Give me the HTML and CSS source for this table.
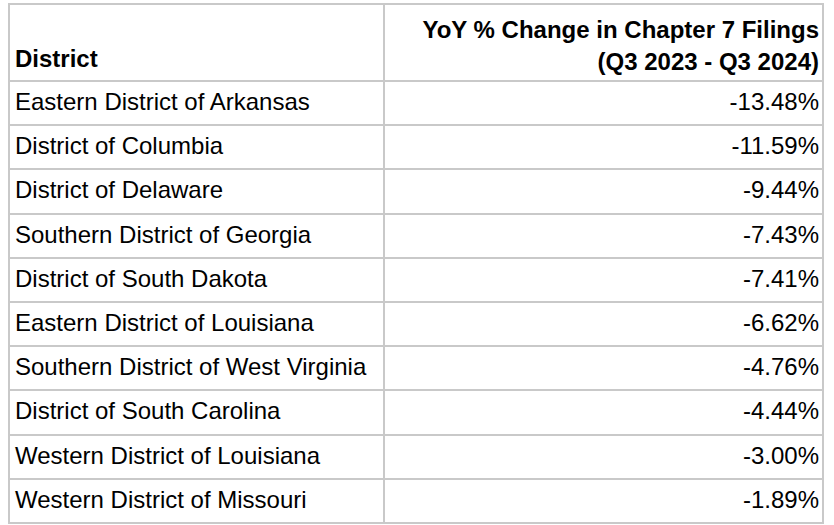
FILE: index.html
```html
<!DOCTYPE html>
<html>
<head>
<meta charset="utf-8">
<link rel="stylesheet" href="styles.css">
</head>
<body>
<div class="filings" role="table">
  <div class="cell head h-district" role="columnheader">District</div>
  <div class="cell head h-change" role="columnheader"><span>YoY % Change in Chapter 7 Filings<br>(Q3 2023 - Q3 2024)</span></div>

  <div class="cell">Eastern District of Arkansas</div><div class="cell num">-13.48%</div>
  <div class="cell">District of Columbia</div><div class="cell num">-11.59%</div>
  <div class="cell">District of Delaware</div><div class="cell num">-9.44%</div>
  <div class="cell">Southern District of Georgia</div><div class="cell num">-7.43%</div>
  <div class="cell">District of South Dakota</div><div class="cell num">-7.41%</div>
  <div class="cell">Eastern District of Louisiana</div><div class="cell num">-6.62%</div>
  <div class="cell">Southern District of West Virginia</div><div class="cell num">-4.76%</div>
  <div class="cell">District of South Carolina</div><div class="cell num">-4.44%</div>
  <div class="cell">Western District of Louisiana</div><div class="cell num">-3.00%</div>
  <div class="cell">Western District of Missouri</div><div class="cell num">-1.89%</div>
</div>
</body>
</html>
```
FILE: styles.css
```css
html, body {
  background: #ffffff;
}
body {
  margin: 3px 0 0 8px;
  font-family: "Liberation Sans", Arial, sans-serif;
  font-size: 24px;
  line-height: 28px;
  color: #000000;
}
.filings {
  display: grid;
  width: 816px;
  box-sizing: border-box;
  grid-template-columns: 373px 1fr;
  grid-template-rows: 75px repeat(10, 42.2px);
  gap: 2px;
  padding: 2px;
  background: #c9c9c9;
}
.cell {
  background: #ffffff;
  display: flex;
  align-items: center;
  padding: 0 3px 2px 5px;
  white-space: nowrap;
  min-width: 0;
}
.num {
  justify-content: flex-end;
}
.head {
  font-weight: bold;
  line-height: 32px;
  align-items: flex-end;
}
.h-district {
  padding-bottom: 5px;
}
.h-change {
  justify-content: flex-end;
  text-align: right;
  padding-bottom: 2px;
}
```
